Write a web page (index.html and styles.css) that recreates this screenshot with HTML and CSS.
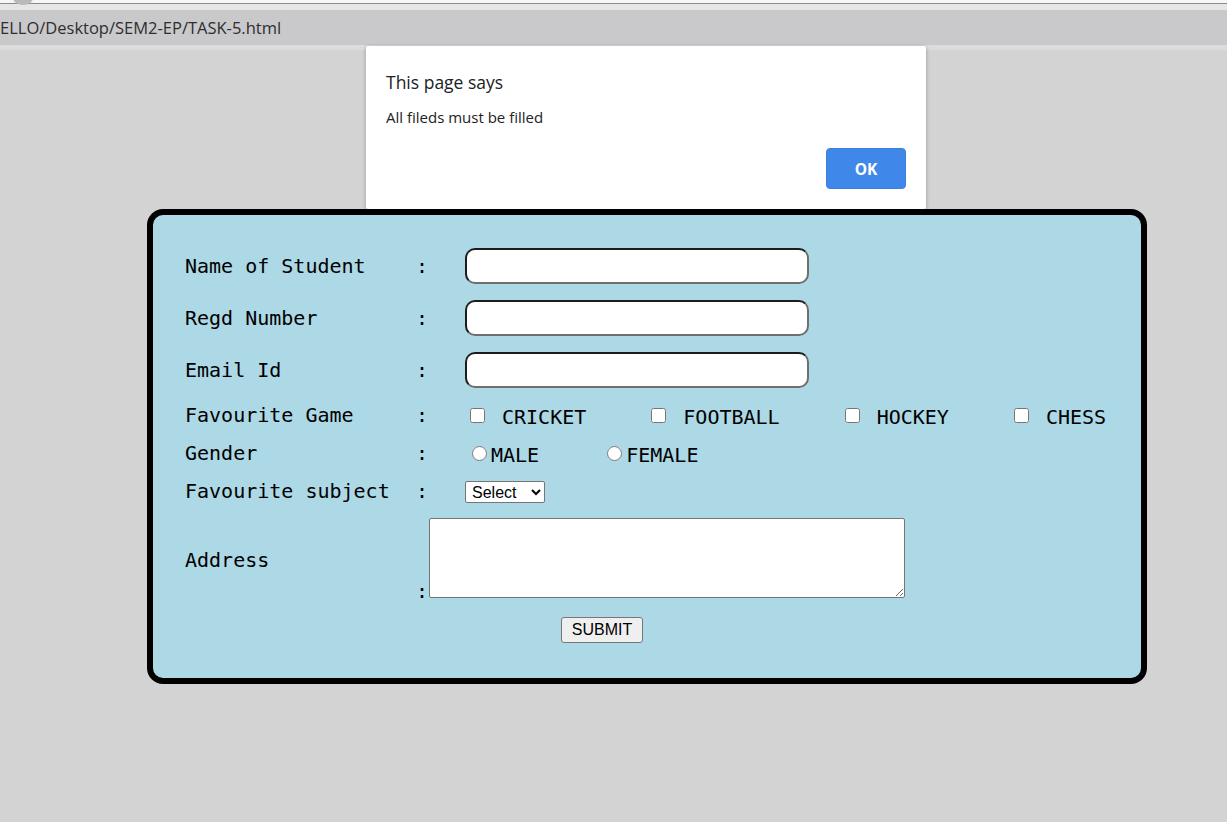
FILE: index.html
```html
<!DOCTYPE html>
<html lang="en">
<head>
<meta charset="utf-8">
<title>TASK-5</title>
<link rel="stylesheet" href="styles.css">
</head>
<body>
  <div class="chrome">
    <div class="chrome-top"><span class="tab-dot"></span></div>
    <div class="urlbar"><span class="url">ELLO/Desktop/SEM2-EP/TASK-5.html</span></div>
    <div class="chrome-sep"></div>
  </div>

  <main class="page">
    <form class="card" onsubmit="return false">
      <div class="row row-input">
        <span class="lbl">Name of Student</span><span class="colon">:</span>
        <input class="txt" type="text">
      </div>
      <div class="row row-input">
        <span class="lbl">Regd Number</span><span class="colon">:</span>
        <input class="txt" type="text">
      </div>
      <div class="row row-input row-last-input">
        <span class="lbl">Email Id</span><span class="colon">:</span>
        <input class="txt" type="text">
      </div>
      <div class="row row-small">
        <span class="lbl">Favourite Game</span><span class="colon">:</span>
        <div class="opts">
          <label class="opt"><input class="cb" type="checkbox">CRICKET</label>
          <label class="opt"><input class="cb" type="checkbox">FOOTBALL</label>
          <label class="opt"><input class="cb" type="checkbox">HOCKEY</label>
          <label class="opt"><input class="cb" type="checkbox">CHESS</label>
        </div>
      </div>
      <div class="row row-small">
        <span class="lbl">Gender</span><span class="colon">:</span>
        <div class="opts">
          <label class="opt opt-radio"><input class="rd" type="radio" name="g">MALE</label>
          <label class="opt opt-radio"><input class="rd" type="radio" name="g">FEMALE</label>
        </div>
      </div>
      <div class="row row-small">
        <span class="lbl">Favourite subject</span><span class="colon">:</span>
        <div><select class="sel"><option>Select</option></select></div>
      </div>
      <div class="row row-address">
        <span class="lbl">Address</span>
        <div class="addr"><span class="colon">:</span><textarea class="area"></textarea></div>
      </div>
      <div class="row-submit">
        <button class="submit" type="submit">SUBMIT</button>
      </div>
    </form>
  </main>

  <div class="dialog">
    <div class="dlg-title">This page says</div>
    <div class="dlg-msg">All fileds must be filled</div>
    <div class="dlg-actions"><button class="ok" type="button">OK</button></div>
  </div>
</body>
</html>
```

FILE: styles.css
```css
* { box-sizing: border-box; }

html, body {
  margin: 0;
  padding: 0;
}

body {
  width: 1227px;
  height: 822px;
  overflow: hidden;
  background: #d3d3d3;
  font-family: "DejaVu Sans Mono", "Liberation Mono", monospace;
  color: #000;
  position: relative;
}

/* browser chrome strip */
.chrome-top {
  height: 10px;
  background: #e6e6e6;
  border-top: 3px solid #f6f6f6;
  position: relative;
  box-shadow: inset 0 1px 0 #8a8a8a;
}
.tab-dot {
  position: absolute;
  left: 13px;
  top: -12px;
  width: 20px;
  height: 14px;
  border-radius: 50%;
  background: #b9b9b9;
}
.urlbar {
  height: 35px;
  background: #c9c9cb;
  display: flex;
  align-items: center;
  overflow: hidden;
  font-family: "Open Sans", "Noto Sans", sans-serif;
  font-size: 16.5px;
  color: #2e2e2e;
}
.url {
  white-space: nowrap;
}
.chrome-sep {
  height: 5px;
  background: #dcdcdc;
}

/* page */
.page {
  padding: 159px 0 0 147px;
}

.card {
  width: 1000px;
  background: #add8e6;
  border: 6px solid #000;
  border-radius: 16px;
  padding: 33px 32px 36px 32px;
  font-size: 20px;
}

.row {
  display: grid;
  grid-template-columns: 231px 49px 1fr;
  align-items: center;
}

.lbl, .colon {
  white-space: pre;
  line-height: 1;
}

.row-input {
  height: 36px;
  margin-bottom: 16px;
}
.row-last-input {
  margin-bottom: 8px;
}
.row-small {
  height: 38px;
}

.txt {
  width: 344px;
  height: 36px;
  margin: 0;
  background: #fff;
  border: 2px solid;
  border-color: #1c1c1c #6f6f6f #6f6f6f #1c1c1c;
  border-radius: 10px;
  outline: none;
}

.opts {
  display: flex;
  align-items: center;
}
.opt {
  display: flex;
  align-items: center;
  margin-right: 60px;
  line-height: 1;
  padding-top: 3px;
}
.opt-radio {
  margin-right: 61px;
  padding-top: 3px;
}
.cb {
  width: 15px;
  height: 15px;
  margin: -3px 17px 0 5px;
}
.rd {
  width: 15px;
  height: 15px;
  margin: -3px 4px 0 7px;
}

.sel {
  width: 80px;
  height: 22px;
  margin: -1px 0 0 0;
  font-family: "Liberation Sans", Arial, sans-serif;
  font-size: 16px;
  background: #fff;
  border: 1px solid #767676;
  border-radius: 2px;
  color: #000;
  padding: 0 0 0 2px;
}

.row-address {
  height: 80px;
  margin-top: 8px;
}
.addr {
  grid-column: 2 / 4;
  align-self: start;
  line-height: 1;
  white-space: nowrap;
}
.addr .colon {
  vertical-align: baseline;
}
.area {
  width: 476px;
  height: 80px;
  margin: 0 0 0 1px;
  vertical-align: baseline;
  border: 1px solid #767676;
  background: #fff;
  border-radius: 2px;
  resize: both;
}

.row-submit {
  margin-top: 18px;
  padding-left: 376px;
  height: 26px;
}
.submit {
  height: 26px;
  width: 82px;
  padding: 0;
  font-family: "Liberation Sans", Arial, sans-serif;
  font-size: 16px;
  color: #000;
  background: #efefef;
  border: 1px solid #767676;
  border-radius: 3px;
}

/* alert dialog overlay */
.dialog {
  position: absolute;
  left: 366px;
  top: 46px;
  width: 560px;
  height: 163px;
  background: #fff;
  border-radius: 2px;
  box-shadow: 0 1px 4px rgba(0, 0, 0, 0.28);
  font-family: "Open Sans", "Noto Sans", sans-serif;
  color: #202124;
  padding: 24px 20px 0 20px;
}
.dlg-title {
  font-size: 17.5px;
  line-height: 24px;
}
.dlg-msg {
  font-size: 15px;
  line-height: 20px;
  margin-top: 13px;
  color: #222;
}
.dlg-actions {
  display: flex;
  justify-content: flex-end;
  margin-top: 21px;
}
.ok {
  width: 80px;
  height: 41px;
  background: #3f88ea;
  color: #fff;
  border: 1px solid #3a80de;
  border-radius: 4px;
  font-family: "Open Sans", "Noto Sans", sans-serif;
  font-weight: 700;
  font-size: 15.5px;
  padding: 0;
}
```
